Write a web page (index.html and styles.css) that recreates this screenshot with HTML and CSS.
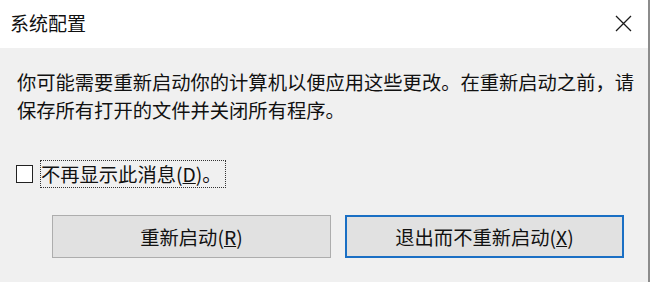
FILE: index.html
```html
<!DOCTYPE html>
<html lang="zh-CN">
<head>
    <meta charset="UTF-8">
    <meta name="viewport" content="width=device-width, initial-scale=1.0">
    <title>系统配置</title>
    <link rel="stylesheet" href="styles.css">
</head>
<body>

    <div class="dialog">
        <!-- Title bar -->
        <div class="titlebar">
            <span class="title">系统配置</span>
            <span class="close">
                <svg width="17" height="17" viewBox="0 0 17 17">
                    <path d="M1 1 L16 16 M16 1 L1 16" stroke="#1a1a1a" stroke-width="1.3" fill="none"/>
                </svg>
            </span>
        </div>

        <!-- Dialog body -->
        <div class="content">
            <p class="message">你可能需要重新启动你的计算机以便应用这些更改。在重新启动之前，请保存所有打开的文件并关闭所有程序。</p>

            <label class="option">
                <span class="box"></span>
                <span class="focus">不再显示此消息(<u>D</u>)。</span>
            </label>

            <div class="buttons">
                <button class="btn">重新启动(<u>R</u>)</button>
                <button class="btn default">退出而不重新启动(<u>X</u>)</button>
            </div>
        </div>
    </div>

</body>
</html>
```

FILE: styles.css
```css
body {
    margin: 0;
    font-family: 'Noto Sans CJK SC', 'Noto Sans', sans-serif;
    color: #111;
    background-color: #f0f0f0;
}
.dialog {
    width: 648px;
    height: 282px;
    border-right: 2px solid #8c8c8c;
    background-color: #f0f0f0;
    display: flex;
    flex-direction: column;
}
.titlebar {
    height: 48px;
    background-color: #fff;
    display: flex;
    align-items: center;
    justify-content: space-between;
    padding: 0 16px 0 10px;
}
.title {
    font-size: 19px;
    line-height: 22px;
    margin-top: -2px;
}
.close {
    display: flex;
    margin-top: -2px;
}
.content {
    padding: 0 0 0 17px;
}
.message {
    width: 625px;
    margin: 20px 0 0 0;
    font-size: 19.3px;
    line-height: 28px;
}
.option {
    display: flex;
    align-items: center;
    gap: 7px;
    margin: 36px 0 0 -1px;
}
.box {
    width: 15px;
    height: 16px;
    border: 1px solid #222;
    background-color: #fff;
}
.focus {
    font-size: 19.3px;
    line-height: 26px;
    border: 1px dotted #333;
    padding: 0 3px 0 0;
}
.buttons {
    display: flex;
    gap: 14px;
    margin: 27px 0 0 35px;
}
.btn {
    width: 279px;
    height: 43px;
    font-family: inherit;
    font-size: 19.3px;
    color: #111;
    background-color: #e1e1e1;
    border: 1px solid #adadad;
    padding: 0;
}
.btn.default {
    border: 2px solid #1a6fc4;
}
```
